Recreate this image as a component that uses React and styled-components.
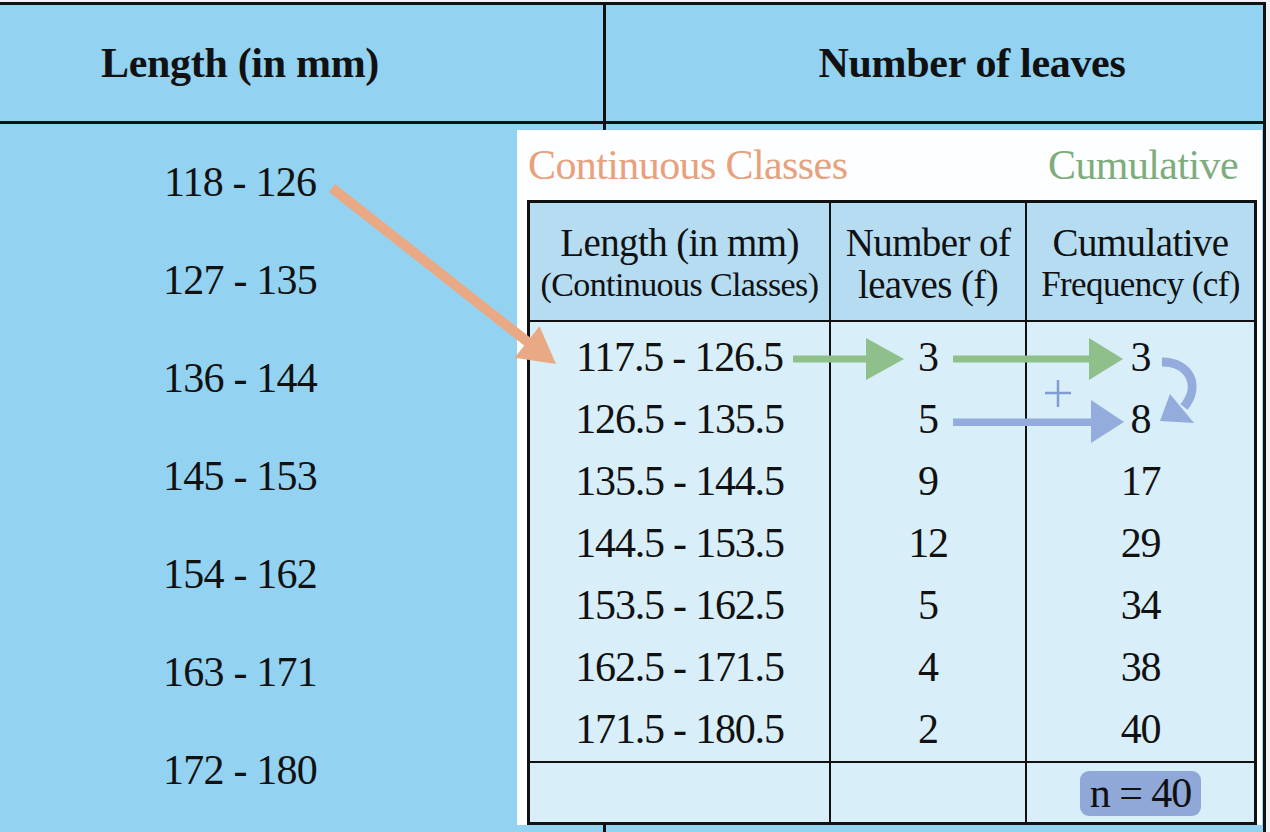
import React from 'react';
import styled, { createGlobalStyle } from 'styled-components';

const GlobalStyle = createGlobalStyle`
  html, body {
    margin: 0;
    padding: 0;
    background: #eef2f4;
  }
  body {
    font-family: "Liberation Serif", "Times New Roman", serif;
    color: #111;
  }
`;

const classes = ['118 - 126', '127 - 135', '136 - 144', '145 - 153', '154 - 162', '163 - 171', '172 - 180'];

const rows = [
  ['117.5 - 126.5', '3', '3'],
  ['126.5 - 135.5', '5', '8'],
  ['135.5 - 144.5', '9', '17'],
  ['144.5 - 153.5', '12', '29'],
  ['153.5 - 162.5', '5', '34'],
  ['162.5 - 171.5', '4', '38'],
  ['171.5 - 180.5', '2', '40'],
];

const App = () => {
  return (
    <Page>
      <GlobalStyle />
      <Sheet>
        <HeadCell $left>Length (in mm)</HeadCell>
        <HeadCell $padLeft="75px">Number of leaves</HeadCell>
        <ClassColumn>
          {classes.map((c) => (
            <ClassItem key={c}>{c}</ClassItem>
          ))}
        </ClassColumn>
        <div />

        <Panel>
          <TitleRow>
            <Title $color="#e8a17c">Continuous Classes</Title>
            <Title $color="#7eac7c">Cumulative</Title>
          </TitleRow>
          <FreqTable>
            <THead>
              <HeadLine $size="39px">Length (in mm)</HeadLine>
              <HeadLine $size="34px">(Continuous Classes)</HeadLine>
            </THead>
            <THead>
              <HeadLine $size="39px">Number of</HeadLine>
              <HeadLine $size="39px">leaves (f)</HeadLine>
            </THead>
            <THead $last>
              <HeadLine $size="39px">Cumulative</HeadLine>
              <HeadLine $size="35px">Frequency (cf)</HeadLine>
            </THead>

            {rows.map((r, i) =>
              r.map((v, j) => (
                <TCell key={`${i}-${j}`} $last={j === 2} $end={i === rows.length - 1}>
                  {v}
                </TCell>
              ))
            )}

            <FootCell />
            <FootCell />
            <FootCell $last>
              <Total>n = 40</Total>
            </FootCell>
          </FreqTable>
        </Panel>
      </Sheet>

      <Arrows width="1270" height="832" viewBox="0 0 1270 832">
        {/* continuous class arrow */}
        <line x1="332" y1="188" x2="529" y2="343" stroke="#eaa985" strokeWidth="10" />
        <polygon points="556,364 514.5,357.8 539.5,326.2" fill="#eaa985" />

        {/* f -> cf arrows */}
        <rect x="793" y="355.5" width="76" height="7" fill="#8fbf8b" />
        <polygon points="866,338 904,359 866,380" fill="#8fbf8b" />
        <rect x="953" y="355.5" width="139" height="7" fill="#8fbf8b" />
        <polygon points="1089,338 1123,359 1089,380" fill="#8fbf8b" />

        <rect x="953" y="418.5" width="142" height="7.5" fill="#93acdb" />
        <polygon points="1091,400 1124,422 1091,443" fill="#93acdb" />

        <path d="M1045 393 H1071 M1058 380 V407" stroke="#7f9dd0" strokeWidth="2.5" />

        <path d="M1162 362 C1190 362 1201 386 1184 407" fill="none" stroke="#93acdb" strokeWidth="9" />
        <polygon points="1160,421 1170,394 1194,423" fill="#93acdb" />
      </Arrows>
    </Page>
  );
};

const Page = styled.div`
  position: relative;
  width: 1270px;
  height: 832px;
  padding-top: 2px;
  box-sizing: border-box;
  overflow: hidden;
`;

const Sheet = styled.div`
  position: relative;
  width: 1266px;
  height: 830px;
  box-sizing: border-box;
  background: #93d3f1;
  border-top: 3px solid #111;
  border-right: 3px solid #111;
  display: grid;
  grid-template-columns: 606px 1fr;
  grid-template-rows: 119px 1fr;
`;

const HeadCell = styled.div`
  display: flex;
  align-items: center;
  justify-content: center;
  box-sizing: border-box;
  border-bottom: 3px solid #111;
  border-right: ${(p) => (p.$left ? '3px solid #111' : 'none')};
  padding-right: ${(p) => (p.$left ? '123px' : '0')};
  padding-left: ${(p) => p.$padLeft || '0'};
  font-size: 42px;
  font-weight: 700;
  letter-spacing: -0.3px;
  line-height: 1;
`;

const ClassColumn = styled.div`
  display: flex;
  flex-direction: column;
  box-sizing: border-box;
  border-right: 3px solid #111;
  padding-top: 9px;
  padding-right: 123px;
`;

const ClassItem = styled.div`
  height: 98px;
  display: flex;
  align-items: center;
  justify-content: center;
  font-size: 42px;
  letter-spacing: -0.8px;
  line-height: 1;
`;

const Panel = styled.div`
  position: absolute;
  left: 517px;
  top: 125px;
  width: 745px;
  height: 695px;
  background: #fdfeff;
  box-sizing: border-box;
  padding: 0 5px 0 10px;
  display: flex;
  flex-direction: column;
`;

const TitleRow = styled.div`
  height: 70px;
  flex: none;
  display: flex;
  align-items: center;
  justify-content: space-between;
  padding: 0 19px 0 1px;
`;

const Title = styled.span`
  color: ${(p) => p.$color};
  font-size: 42px;
  letter-spacing: -0.6px;
  line-height: 1;
`;

const FreqTable = styled.div`
  flex: 1;
  display: grid;
  grid-template-columns: 301px 196px 1fr;
  grid-template-rows: 119px repeat(6, 62px) 69px 1fr;
  border: 3px solid #111;
  background: #d8eef8;
  box-sizing: border-box;
`;

const THead = styled.div`
  display: flex;
  flex-direction: column;
  align-items: center;
  justify-content: center;
  padding-top: 4px;
  box-sizing: border-box;
  background: #b5dcf1;
  border-bottom: 2px solid #111;
  border-right: ${(p) => (p.$last ? 'none' : '2px solid #111')};
`;

const HeadLine = styled.div`
  font-size: ${(p) => p.$size};
  letter-spacing: -0.6px;
  line-height: 42px;
  white-space: nowrap;
`;

const TCell = styled.div`
  display: flex;
  justify-content: center;
  align-items: flex-start;
  padding-top: 14px;
  box-sizing: border-box;
  font-size: 42px;
  letter-spacing: -1.2px;
  line-height: 42px;
  border-right: ${(p) => (p.$last ? 'none' : '2px solid #111')};
  border-bottom: ${(p) => (p.$end ? '2px solid #111' : 'none')};
`;

const FootCell = styled.div`
  display: flex;
  align-items: center;
  justify-content: center;
  padding-top: 2px;
  box-sizing: border-box;
  border-right: ${(p) => (p.$last ? 'none' : '2px solid #111')};
`;

const Total = styled.span`
  display: inline-block;
  background: #8fa8d8;
  border-radius: 9px;
  padding: 0 10px;
  font-size: 42px;
  letter-spacing: -1px;
  line-height: 45px;
`;

const Arrows = styled.svg`
  position: absolute;
  left: 0;
  top: 0;
  pointer-events: none;
`;

export default App;
